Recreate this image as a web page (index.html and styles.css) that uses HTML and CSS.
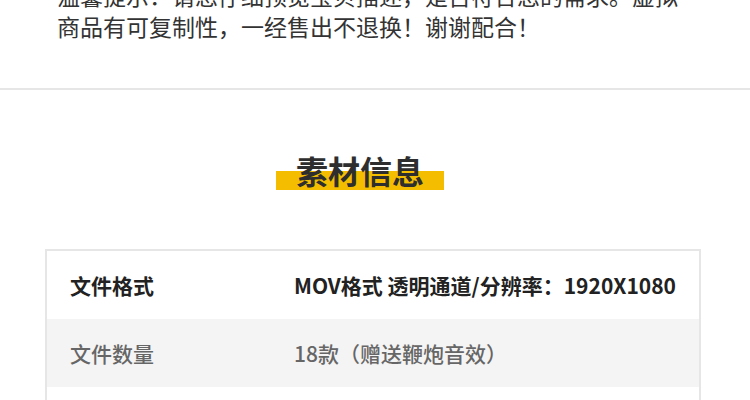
FILE: index.html
```html
<!DOCTYPE html>
<html lang="zh-CN">
<head>
<meta charset="utf-8">
<link rel="stylesheet" href="styles.css">
</head>
<body>
<section class="notice">
  <p class="notice-text">温馨提示：请您仔细预览宝贝描述，是否符合您的需求。虚拟商品有可复制性，一经售出不退换！谢谢配合！</p>
</section>
<section class="info">
  <div class="title-wrap"><h2 class="title">素材信息</h2></div>
  <div class="table">
    <div class="row row-main">
      <span class="label">文件格式</span>
      <span class="value">MOV格式 透明通道/分辨率：1920X1080</span>
    </div>
    <div class="row row-alt">
      <span class="label">文件数量</span>
      <span class="value">18款（赠送鞭炮音效）</span>
    </div>
    <div class="row row-main">
      <span class="label">文件大小</span>
      <span class="value">1.2G</span>
    </div>
  </div>
</section>
</body>
</html>
```
FILE: styles.css
```css
* { box-sizing: border-box; }
html, body { margin: 0; padding: 0; background: #fff; }
body {
  font-family: "Noto Sans CJK SC", "Noto Sans", sans-serif;
  color: #333;
  overflow: hidden;
  height: 400px;
}
.notice {
  padding: 0 0 46px 57px;
  border-bottom: 2px solid #e6e6e6;
}
.notice-text {
  margin: -20px 0 0 0;
  font-size: 23px;
  line-height: 31px;
  color: #333;
  width: 630px;
}
.info {
  padding-top: 60px;
}
.title-wrap {
  display: flex;
  justify-content: center;
  padding-right: 30px;
}
.title {
  margin: 0;
  width: 168px;
  height: 40px;
  font-size: 32px;
  line-height: 40px;
  font-weight: 700;
  text-align: center;
  color: #2e2e2e;
  background: linear-gradient(to bottom, transparent 21px, #f5bd00 21px, #f5bd00 40px);
}
.table {
  margin: 59px 49px 0 45px;
  border: 2px solid #e6e6e6;
}
.row {
  display: grid;
  grid-template-columns: 224px 1fr;
  align-items: center;
  height: 68px;
  padding-left: 23px;
  font-size: 21px;
}
.row-main { background: #fff; color: #222; font-weight: 700; }
.row-alt { background: #f4f4f4; color: #666; font-weight: 500; }
```
